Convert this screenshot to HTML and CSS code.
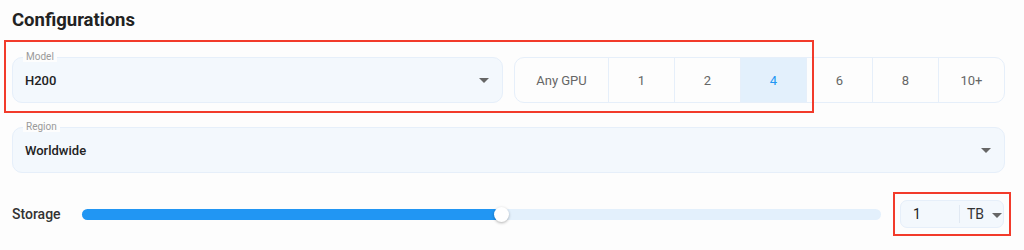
FILE: index.html
```html
<!DOCTYPE html>
<html lang="en">
<head>
    <meta charset="UTF-8">
    <meta name="viewport" content="width=device-width, initial-scale=1.0">
    <title>Configurations</title>
    <link rel="stylesheet" href="styles.css">
</head>
<body>
    <div class="config">
        <h2 class="title">Configurations</h2>

        <!-- Model + jumlah GPU -->
        <div class="row-two">
            <div class="field">
                <span class="field-label">Model</span>
                <span class="field-value">H200</span>
                <span class="caret"></span>
            </div>
            <div class="gpu-group">
                <button class="gpu-btn any">Any GPU</button>
                <button class="gpu-btn">1</button>
                <button class="gpu-btn">2</button>
                <button class="gpu-btn active">4</button>
                <button class="gpu-btn">6</button>
                <button class="gpu-btn">8</button>
                <button class="gpu-btn">10+</button>
            </div>
            <div class="mark mark-model"></div>
        </div>

        <!-- Region -->
        <div class="field region">
            <span class="field-label">Region</span>
            <span class="field-value">Worldwide</span>
            <span class="caret"></span>
        </div>

        <!-- Storage -->
        <div class="storage">
            <span class="storage-label">Storage</span>
            <div class="slider">
                <div class="slider-fill" style="width: 52.4%"></div>
                <div class="slider-thumb" style="left: 52.4%"></div>
            </div>
            <div class="size-box">
                <span class="size-value">1</span>
                <span class="size-unit">TB<span class="caret small"></span></span>
                <div class="mark mark-size"></div>
            </div>
        </div>
    </div>
</body>
</html>
```

FILE: styles.css
```css
/* Tampilan utama */
body {
    margin: 0;
    min-height: 250px;
    background: #fdfdfd;
    font-family: Roboto, "Liberation Sans", Arial, sans-serif;
    color: #222;
}
.config {
    width: 993px;
    padding: 0 0 22px 12px;
}
.title {
    margin: 0;
    padding-top: 9px;
    height: 57px;
    box-sizing: border-box;
    font-size: 18.5px;
    font-weight: 700;
    line-height: 22px;
    color: #222;
}
/* Baris model dan GPU */
.row-two {
    position: relative;
    display: grid;
    grid-template-columns: 1fr 1fr;
    gap: 11px;
}
.field {
    position: relative;
    height: 46px;
    box-sizing: border-box;
    background: #f3f8fd;
    border: 1px solid #e6effa;
    border-radius: 10px;
    display: flex;
    align-items: center;
    padding: 0 12px;
}
.field-label {
    position: absolute;
    top: -7px;
    left: 10px;
    padding: 0 3px;
    background: #fdfdfd;
    font-size: 10px;
    line-height: 11px;
    color: #9a9a9a;
}
.field-value {
    flex: 1;
    font-size: 13px;
    font-weight: 500;
    color: #222;
}
.caret {
    width: 0;
    height: 0;
    border-left: 5px solid transparent;
    border-right: 5px solid transparent;
    border-top: 5px solid #666;
    margin-right: 1px;
}
.caret.small {
    display: inline-block;
    margin-left: 8px;
    vertical-align: middle;
}
.gpu-group {
    display: flex;
    height: 46px;
    box-sizing: border-box;
    border: 1px solid #e6effa;
    border-radius: 10px;
    overflow: hidden;
    background: #fdfdfd;
}
.gpu-btn {
    flex: 0 0 66px;
    border: none;
    border-left: 1px solid #e6effa;
    background: transparent;
    font-family: inherit;
    font-size: 13px;
    color: #666;
    padding: 0;
}
.gpu-btn.any {
    flex: 0 0 93px;
    border-left: none;
}
.gpu-btn:last-child {
    flex: 1;
}
.gpu-btn.active {
    background: #e3f0fc;
    color: #2196f3;
}
/* Region */
.region {
    margin-top: 24px;
}
/* Storage */
.storage {
    display: flex;
    align-items: center;
    margin-top: 27px;
    height: 28px;
}
.storage-label {
    flex: 0 0 70px;
    font-size: 14px;
    font-weight: 500;
    color: #333;
}
.slider {
    position: relative;
    flex: 0 0 799px;
    height: 11px;
    border-radius: 6px;
    background: #e3f0fc;
}
.slider-fill {
    height: 100%;
    border-radius: 6px;
    background: #2196f3;
}
.slider-thumb {
    position: absolute;
    top: 50%;
    width: 15px;
    height: 15px;
    margin: -7px 0 0 -7px;
    border-radius: 50%;
    background: #fff;
    box-shadow: 0 1px 3px rgba(0, 0, 0, 0.3);
}
.size-box {
    position: relative;
    flex: 0 0 104px;
    margin-left: 19px;
    height: 28px;
    box-sizing: border-box;
    background: #f3f8fd;
    border: 1px solid #e6effa;
    border-radius: 7px;
    display: flex;
    align-items: center;
    font-size: 14px;
    white-space: nowrap;
}
.size-value {
    width: 59px;
    padding-left: 12px;
    box-sizing: border-box;
    border-right: 1px solid #e1e9f3;
    line-height: 18px;
    color: #222;
}
.size-unit {
    padding-left: 7px;
    color: #333;
}
/* Kotak merah penanda */
.mark {
    position: absolute;
    border: 2px solid #f23b2b;
    pointer-events: none;
}
.mark-model {
    left: -8px;
    top: -17px;
    width: 806px;
    height: 69px;
}
.mark-size {
    left: -8px;
    top: -9px;
    width: 114px;
    height: 40px;
}
```
